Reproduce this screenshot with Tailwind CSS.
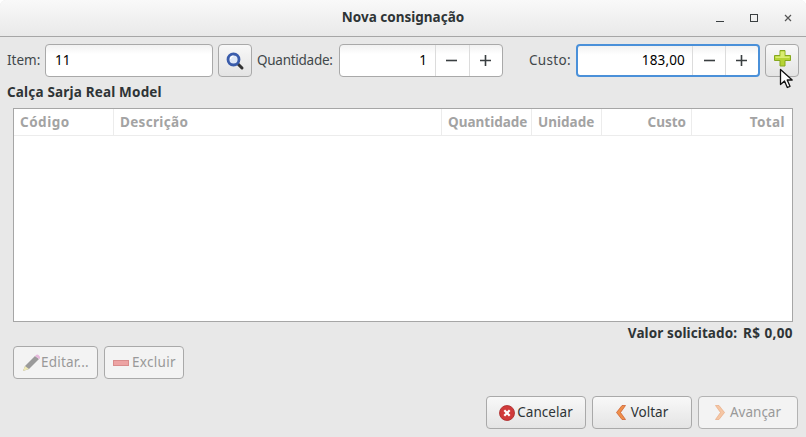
<!DOCTYPE html>
<html lang="pt">
<head>
<meta charset="UTF-8">
<title>Nova consignação</title>
<script src="https://cdn.jsdelivr.net/npm/@tailwindcss/browser@4"></script>
</head>
<body class="bg-white overflow-hidden">
<div class="relative w-[806px] h-[437px] flex flex-col bg-[#e8e8e8] rounded-t-[6px] overflow-hidden font-['Noto_Sans',sans-serif] text-[13.5px] text-[#2e3436]">

  <!-- title bar -->
  <header class="relative h-[37px] shrink-0 flex items-center justify-center bg-gradient-to-b from-[#f9f9f9] to-[#e9e9e9] border-b border-[#a6a6a6]">
    <h1 class="font-bold text-[13.5px] pb-[1px]">Nova consignação</h1>
    <div class="absolute right-0 top-0 h-full flex items-center">
      <svg class="w-[12px] h-[12px] mr-[22px]" viewBox="0 0 12 12"><path d="M2 9.500h8" stroke="#3a3f41" stroke-width="1"/></svg>
      <svg class="w-[12px] h-[12px] mr-[22px]" viewBox="0 0 12 12"><rect x="2.500" y="2.500" width="7" height="7" fill="none" stroke="#3a3f41" stroke-width="1"/></svg>
      <svg class="w-[12px] h-[12px] mr-[12px]" viewBox="0 0 12 12"><path d="M3 3l6 6M9 3l-6 6" stroke="#555" stroke-width="1.200"/></svg>
    </div>
  </header>

  <!-- entry row -->
  <div class="flex items-center h-[33px] mt-[7px] pl-[7px] shrink-0">
    <span class="w-[38px] text-[#41474a]">Item:</span>
    <div class="w-[168px] h-[33px] flex items-center pl-[9px] rounded-[4px] border border-[#a9a9a9] bg-gradient-to-b from-[#f2f2f2] to-white to-30% text-black">11</div>
    <button class="w-[34px] h-[33px] ml-[5px] flex items-center justify-center rounded-[4px] border border-[#a9a9a9] bg-gradient-to-b from-[#f8f8f8] to-[#e4e4e4]">
      <svg width="20" height="20" viewBox="0 0 20 20">
        <path d="M12.500 12.500l4.500 4.500" stroke="#333" stroke-width="3" stroke-linecap="round"/>
        <circle cx="8.500" cy="8.500" r="5.500" fill="#dfe8f7" stroke="#3a5cab" stroke-width="2.800"/>
        <path d="M5.500 8a3.200 3.200 0 0 1 3-3" stroke="#fff" stroke-width="1.200" fill="none"/>
      </svg>
    </button>
    <span class="w-[82px] ml-[5px] tracking-[-0.27px] text-[#41474a]">Quantidade:</span>
    <div class="w-[164px] h-[33px] flex rounded-[4px] border border-[#a9a9a9] bg-gradient-to-b from-[#f2f2f2] to-white to-30% text-black">
      <div class="flex-1 flex items-center justify-end pr-[8px]">1</div>
      <div class="w-[34px] pr-[2px] flex items-center justify-center border-l border-[#dcdcdc]"><svg width="11" height="11" viewBox="0 0 11 11"><path d="M0 5.500h11" stroke="#3a3f41" stroke-width="1.600"/></svg></div>
      <div class="w-[33px] pr-[2px] flex items-center justify-center border-l border-[#dcdcdc]"><svg width="11" height="11" viewBox="0 0 11 11"><path d="M0 5.500h11M5.500 0v11" stroke="#3a3f41" stroke-width="1.600"/></svg></div>
    </div>
    <span class="w-[47px] ml-[26px] tracking-[0.3px] text-[#41474a]">Custo:</span>
    <div class="w-[184px] h-[33px] flex rounded-[4px] border-2 border-[#4a90d9] bg-gradient-to-b from-[#f2f2f2] to-white to-30% text-black">
      <div class="flex-1 flex items-center justify-end pr-[7px] tracking-[0.15px]">183,00</div>
      <div class="w-[33px] flex items-center justify-center border-l border-[#dcdcdc]"><svg width="11" height="11" viewBox="0 0 11 11"><path d="M0 5.500h11" stroke="#3a3f41" stroke-width="1.600"/></svg></div>
      <div class="w-[33px] pr-[1px] flex items-center justify-center border-l border-[#dcdcdc]"><svg width="11" height="11" viewBox="0 0 11 11"><path d="M0 5.500h11M5.500 0v11" stroke="#3a3f41" stroke-width="1.600"/></svg></div>
    </div>
    <button class="w-[34px] h-[33px] ml-[5px] flex items-start justify-center pt-[5px] rounded-[4px] border border-[#a9a9a9] bg-gradient-to-b from-[#f8f8f8] to-[#e4e4e4]">
      <svg width="17" height="17" viewBox="0 0 17 17"><path d="M6 .5h5v5h5.500v5H11v5.500H6V10.500H.5v-5H6z" fill="#b5d334" stroke="#86a81e"/><path d="M6.500 1.500h4v5h5v1.500H1.500V6.500h5z" fill="#d9ec72"/></svg>
    </button>
  </div>

  <div class="font-bold h-[16px] leading-[16px] mt-[7px] pl-[7px] shrink-0 tracking-[0.18px]">Calça Sarja Real Model</div>

  <!-- table -->
  <div class="mx-[13px] mt-[8px] h-[214px] shrink-0 bg-white border border-[#a6a6a6]">
    <div class="flex h-[27px] border-b border-[#ececec] font-bold text-[#a3a3a3] leading-[26px]">
      <div class="w-[100px] pl-[6px] border-r border-[#ececec] tracking-[0.5px]">Código</div>
      <div class="w-[328px] pl-[6px] border-r border-[#ececec] tracking-[0.33px]">Descrição</div>
      <div class="w-[90px] pl-[6px] border-r border-[#ececec]">Quantidade</div>
      <div class="w-[70px] pl-[6px] border-r border-[#ececec]">Unidade</div>
      <div class="w-[90px] pr-[5px] text-right border-r border-[#ececec]">Custo</div>
      <div class="flex-1 pr-[7px] text-right tracking-[0.4px]">Total</div>
    </div>
  </div>

  <div class="flex justify-end gap-[6px] pr-[13px] mt-[2px] h-[18px] leading-[18px] font-bold shrink-0">
    <span class="tracking-[0.1px]">Valor solicitado:</span><span class="tracking-[0.4px]">R$ 0,00</span>
  </div>

  <!-- edit buttons -->
  <div class="flex gap-[6px] pl-[13px] mt-[4px] shrink-0 text-[#999]">
    <button class="w-[85px] h-[33px] flex items-center pl-[8px] gap-[1px] rounded-[4px] border border-[#a9a9a9] bg-[#f3f3f3]">
      <svg class="shrink-0" width="18" height="18" viewBox="0 0 18 18">
        <path d="M1 17l2-5L13 2l4 3L7 15z" fill="#9a9a9a"/>
        <path d="M13 2l1.500-1.200a1.500 1.500 0 0 1 2 .2l1 1.200a1.500 1.500 0 0 1-.5 2.800z" fill="#e6b8dc"/>
        <path d="M1 17l2-5 4 3z" fill="#efe9b5"/>
      </svg>
      <span class="tracking-[0.2px]">Editar...</span>
    </button>
    <button class="w-[80px] h-[33px] flex items-center pl-[8px] gap-[3px] rounded-[4px] border border-[#a9a9a9] bg-[#f3f3f3]">
      <span class="block shrink-0 w-[16px] h-[6px] bg-[#eda3a3] border border-[#d98c8c]"></span>
      <span class="tracking-[0.3px]">Excluir</span>
    </button>
  </div>

  <!-- dialog buttons -->
  <div class="flex justify-end gap-[6px] pr-[8px] mt-[17px] shrink-0">
    <button class="w-[100px] h-[33px] flex items-center justify-center gap-[2px] rounded-[4px] border border-[#a9a9a9] bg-gradient-to-b from-[#f8f8f8] to-[#e4e4e4]">
      <svg width="16" height="16" viewBox="0 0 16 16"><circle cx="8" cy="8" r="7.500" fill="#d03a3a" stroke="#a92828" stroke-width=".8"/><path d="M5.300 5.300l5.400 5.400M10.700 5.300l-5.400 5.400" stroke="#fff" stroke-width="2.200"/></svg>
      <span class="tracking-[0.05px]">Cancelar</span>
    </button>
    <button class="w-[100px] h-[33px] flex items-center justify-center gap-[5px] rounded-[4px] border border-[#a9a9a9] bg-gradient-to-b from-[#f8f8f8] to-[#e4e4e4]">
      <svg width="10" height="15" viewBox="0 0 10 15"><path d="M6 .5h3.500L4.500 7.500l5 7H6L.5 7.500z" fill="#ef8f4a" stroke="#c9582a" stroke-width=".7"/></svg>
      <span>Voltar</span>
    </button>
    <button class="w-[100px] h-[33px] flex items-center justify-center gap-[5px] rounded-[4px] border border-[#b3b3b3] bg-[#f3f3f3] text-[#999]">
      <svg width="10" height="15" viewBox="0 0 10 15"><path d="M4 .5H.5l5 7-5 7H4l5.500-7z" fill="#f5c6a4" stroke="#e8ab84" stroke-width=".7"/></svg>
      <span>Avançar</span>
    </button>
  </div>

  <!-- mouse pointer -->
  <svg class="absolute left-[779px] top-[68px]" width="15" height="22" viewBox="0 0 15 22"><path d="M1.500 1.500v15l4-3.500 2.800 6.500 2.700-1.200-2.800-6.300h5z" fill="#fff" stroke="#111" stroke-width="1.300" stroke-linejoin="round"/></svg>
</div>
</body>
</html>
